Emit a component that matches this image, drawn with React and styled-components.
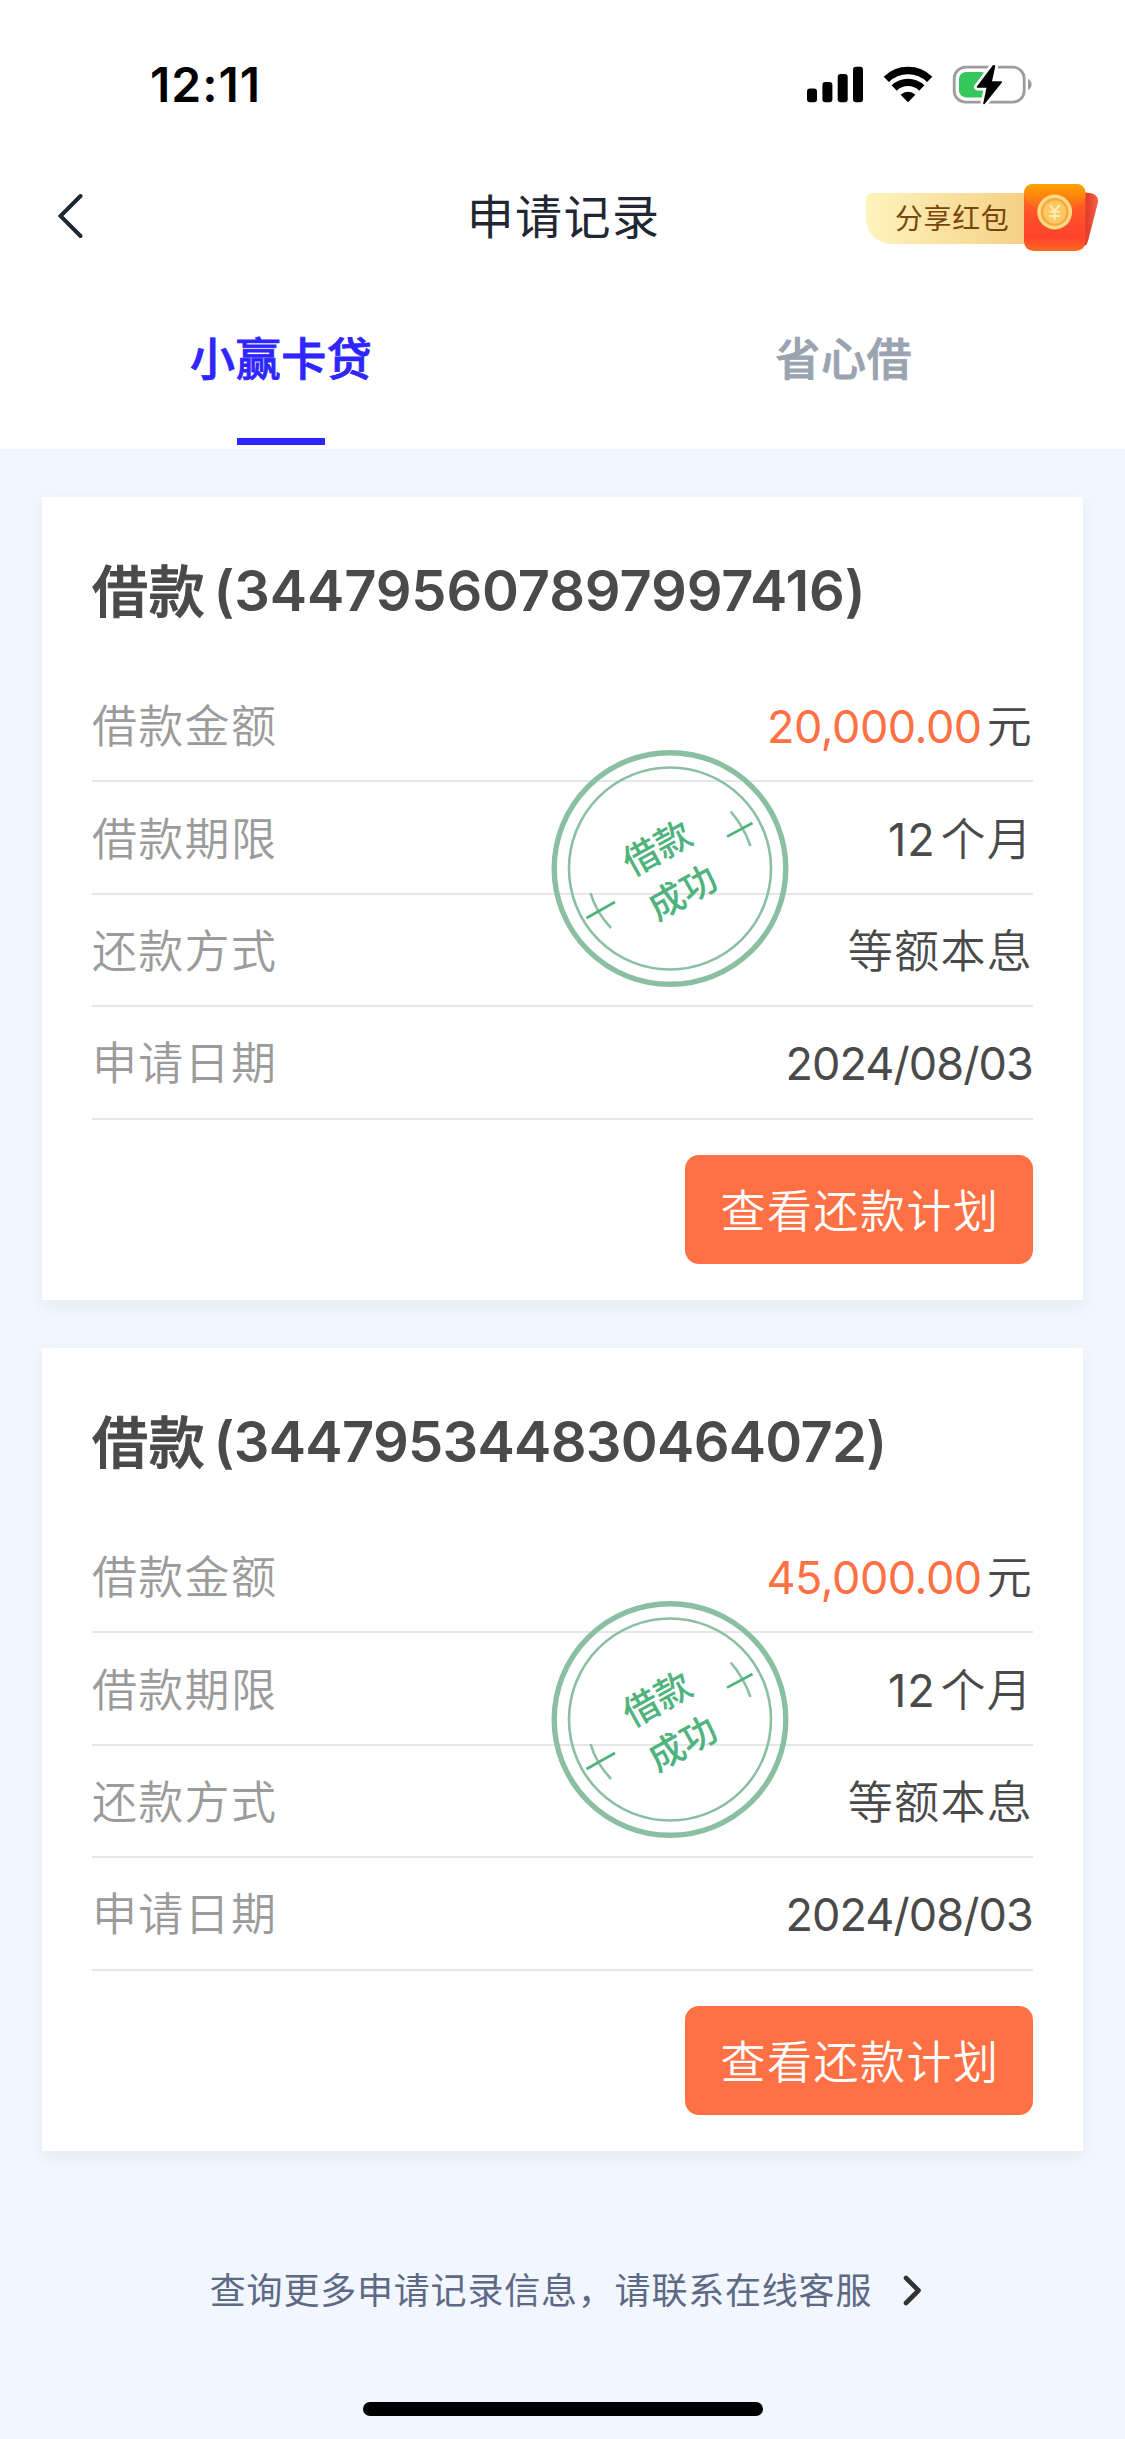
import React from "react";
import styled, { createGlobalStyle } from "styled-components";

const Global = createGlobalStyle`
  * { box-sizing: border-box; }
  body { margin: 0; background: #f2f6fe; }
  button { border: 0; padding: 0; margin: 0; background: none; font: inherit; color: inherit; }
`;

const Page = styled.div`
  width: 1125px;
  height: 2439px;
  display: flex;
  flex-direction: column;
  background: #f2f6fe;
  font-family: Inter, "Noto Sans CJK SC", sans-serif;
  overflow: hidden;
`;

const Top = styled.header`
  height: 449px;
  flex: none;
  background: #fff;
  display: flex;
  flex-direction: column;
`;

const StatusBar = styled.div`
  height: 141px;
  padding: 28px 93px 0 150px;
  display: flex;
  align-items: center;
  justify-content: space-between;
`;

const Clock = styled.div`
  font-size: 48px;
  font-weight: 600;
  line-height: 60px;
  letter-spacing: 1px;
  color: #000;
`;

const StatusIcons = styled.div`
  display: flex;
  align-items: center;
`;

const NavBar = styled.nav`
  height: 150px;
  display: grid;
  grid-template-columns: 1fr auto 1fr;
  align-items: center;
  padding: 0 26px;
`;

const BackButton = styled.button`
  display: flex;
  justify-self: start;
  padding-left: 32px;
`;

const NavTitle = styled.h1`
  margin: 2px 0 0;
  padding-left: 2px;
  font-size: 47px;
  font-weight: 400;
  line-height: 60px;
  color: #1f2733;
  letter-spacing: 1.4px;
`;

const Share = styled.button`
  justify-self: end;
  display: flex;
  align-items: center;
  padding-top: 4px;
`;

const ShareLabel = styled.span`
  width: 161px;
  height: 51px;
  margin-right: -4px;
  padding: 1px 0 0 29px;
  border-radius: 6px 0 0 26px;
  background: linear-gradient(90deg, #fef4bd, #f5d083);
  color: #79460f;
  font-size: 28px;
  line-height: 51px;
  text-align: left;
  letter-spacing: 0.6px;
`;

const Tabs = styled.div`
  flex: 1;
  display: grid;
  grid-template-columns: 1fr 1fr;
`;

const Tab = styled.button`
  display: flex;
  flex-direction: column;
  align-items: center;
  justify-content: space-between;
  padding: 38px 0 4px;
  font-size: 45px;
  font-weight: 500;
  -webkit-text-stroke: 0.8px currentColor;
  line-height: 62px;
  letter-spacing: 0.6px;
  color: ${(p) => (p.$active ? "#2f25ff" : "#9aa3b0")};
  &::after {
    content: "";
    width: 88px;
    height: 7px;
    background: ${(p) => (p.$active ? "#2f25ff" : "transparent")};
  }
`;

const List = styled.main`
  padding: 48px 42px 0;
  display: flex;
  flex-direction: column;
  gap: 48px;
`;

const Card = styled.article`
  position: relative;
  height: 803px;
  padding: 54px 50px 0;
  display: flex;
  flex-direction: column;
  background: #fff;
  box-shadow: 0 6px 14px rgba(40, 45, 60, 0.06);
`;

const CardTitle = styled.h2`
  margin: 0 0 40px;
  height: 79px;
  display: flex;
  align-items: center;
  gap: 8px;
  font-size: 56px;
  font-weight: 600;
  color: #4a4a4a;
  white-space: nowrap;
`;

const LoanKind = styled.span`
  margin-bottom: 7px;
  font-weight: 500;
  -webkit-text-stroke: 1px currentColor;
  letter-spacing: 0.8px;
`;

const LoanId = styled.span`
  letter-spacing: ${(p) => p.$spacing}px;
`;

const Row = styled.div`
  height: 112.4px;
  padding-top: 4px;
  display: flex;
  align-items: center;
  justify-content: space-between;
  border-bottom: 2px solid #e6e6e6;
  font-size: 45px;
  font-weight: 350;
  line-height: 64px;
`;

const Label = styled.span`
  color: #9b9b9b;
  letter-spacing: 1.3px;
`;

const Value = styled.span`
  display: flex;
  align-items: center;
  gap: 5px;
  color: #4a4a4a;
  letter-spacing: 1.3px;
`;

const Figure = styled.span`
  font-weight: 380;
  color: ${(p) => (p.$accent ? "#ff7043" : "inherit")};
  letter-spacing: ${(p) => p.$spacing ?? -0.5}px;
`;

const PlanButton = styled.button`
  align-self: flex-end;
  width: 348px;
  height: 109px;
  margin-top: 35px;
  padding: 0 0 2px 2px;
  border-radius: 14px;
  background: #ff7144;
  color: #fff;
  font-size: 45px;
  font-weight: 350;
  letter-spacing: 1.5px;
`;

const Stamp = styled.svg`
  position: absolute;
  left: 509px;
  top: 253px;
`;

const Footer = styled.footer`
  flex: 1;
  padding-top: 104px;
  display: flex;
  flex-direction: column;
  align-items: center;
`;

const Help = styled.a`
  margin-left: 8px;
  display: flex;
  align-items: center;
  gap: 31px;
  height: 70px;
  font-size: 36px;
  color: #5d6a85;
`;

const HelpText = styled.span`
  padding-bottom: 5px;
  letter-spacing: 0.8px;
`;

const HomeBar = styled.div`
  margin-top: 77px;
  width: 400px;
  height: 14px;
  border-radius: 7px;
  background: #000;
`;

const StatusGlyphs = () => (
  <svg width="226" height="42" viewBox="806 63 226 42">
    <rect x="807" y="87.5" width="10" height="13.7" rx="3" />
    <rect x="822.4" y="81" width="10" height="20.2" rx="3" />
    <rect x="837.7" y="73" width="10" height="28.2" rx="3" />
    <rect x="853" y="65.8" width="10" height="35.4" rx="3" />
    <g fill="none" stroke="#000" strokeWidth="7.4">
      <path d="M886.3 78.3 A31 31 0 0 1 929.7 78.3" />
      <path d="M894.2 87 A19.7 19.7 0 0 1 921.8 87" />
    </g>
    <path d="M908 101.3 L900.6 93.8 A10.5 10.5 0 0 1 915.4 93.8 Z" />
    <rect x="954.2" y="66.2" width="70" height="35" rx="11.5" fill="none" stroke="#9c9c9c" strokeWidth="2.8" />
    <path d="M1028 78 Q1031.6 80 1031.6 83.5 Q1031.6 87 1028 89 Z" fill="#9c9c9c" />
    <rect x="959" y="71" width="29" height="25.4" rx="7" fill="#34c759" />
    <path
      d="M993.5 64.8 L977.5 86 H987.5 L984 102.5 L1001.3 81 H991 L994.5 65 Z"
      stroke="#fff" strokeWidth="7" strokeLinejoin="round" fill="#fff"
    />
    <path
      d="M993.5 64.8 L977.5 86 H987.5 L984 102.5 L1001.3 81 H991 L994.5 65 Z"
      stroke="#000" strokeWidth="1.6" strokeLinejoin="round"
    />
  </svg>
);

const Envelope = () => (
  <svg width="76" height="70" viewBox="1023 183 76 70">
    <defs>
      <linearGradient id="env" x1="0" y1="0" x2="0" y2="1">
        <stop offset="0" stopColor="#ff7a1c" />
        <stop offset="0.5" stopColor="#ff4f28" />
        <stop offset="0.8" stopColor="#ff432c" />
        <stop offset="1" stopColor="#ff6a20" />
      </linearGradient>
      <linearGradient id="flap" x1="0" y1="0" x2="0" y2="1">
        <stop offset="0" stopColor="#ffa400" />
        <stop offset="1" stopColor="#ff5a22" />
      </linearGradient>
      <linearGradient id="backCard" x1="0" y1="0" x2="1" y2="0">
        <stop offset="0.3" stopColor="#dd3a2c" />
        <stop offset="1" stopColor="#fa5f48" />
      </linearGradient>
    </defs>
    <path d="M1080 192 L1090 193 Q1099.5 195 1097.8 203 L1088 241 Q1086.5 247 1080 247 Z" fill="url(#backCard)" />
    <rect x="1024" y="184" width="61.5" height="67" rx="9.5" fill="url(#env)" />
    <path d="M1024 197 V193.5 Q1024 184 1033.5 184 H1076 Q1085.5 184 1085.5 193.5 V197 Q1082 205 1072 209 Q1055 215 1038 209 Q1028 205 1024 197 Z" fill="url(#flap)" />
    <circle cx="1054.7" cy="213.2" r="17.4" fill="#e8602a" opacity="0.5" />
    <circle cx="1054.7" cy="212" r="17.4" fill="#fdd887" />
    <circle cx="1054.7" cy="212" r="12.7" fill="#fcc765" stroke="#f6a83c" strokeWidth="2.4" />
    <path d="M1049.6 205 L1054.7 211 L1059.8 205 M1054.7 211 V220 M1049.5 211.8 H1060 M1049.5 216 H1060" fill="none" stroke="#ffedb0" strokeWidth="2" />
  </svg>
);

const SuccessStamp = () => (
  <Stamp width="238" height="238" viewBox="-119 -119 238 238">
    <g fill="none" stroke="#8bbfa1">
      <circle cy="-0.5" r="115.8" strokeWidth="5.4" />
      <circle cy="-0.5" r="101" strokeWidth="2.6" />
      <path d="M60.7 -57.5 Q74 -42 80.5 -23" strokeWidth="2.6" />
      <path d="M-79.5 24 Q-74 43 -59 59" strokeWidth="2.6" />
      <g stroke="#4fb37d" strokeWidth="2.6">
        <path d="M57 -32.3 L82.5 -46" />
        <path d="M-83.5 49 L-55 33" />
      </g>
    </g>
    <g
      transform="rotate(-29)"
      fill="#4fb37d"
      fontFamily="'Noto Sans CJK SC', sans-serif"
      fontSize="36"
      fontWeight="500"
      textAnchor="middle"
    >
      <text x="-1" y="-11.5">借款</text>
      <text x="-0.5" y="39.5">成功</text>
    </g>
  </Stamp>
);

const loans = [
  { id: "344795607897997416", amount: "20,000.00", idSpacing: -0.15 },
  { id: "344795344830464072", amount: "45,000.00", idSpacing: -0.7 },
];

const LoanCard = ({ loan }) => (
  <Card>
    <CardTitle>
      <LoanKind>借款</LoanKind>
      <LoanId $spacing={loan.idSpacing}>({loan.id})</LoanId>
    </CardTitle>
    <Row>
      <Label>借款金额</Label>
      <Value><Figure $accent>{loan.amount}</Figure>元</Value>
    </Row>
    <Row>
      <Label>借款期限</Label>
      <Value><Figure $spacing={0.8}>12</Figure>个月</Value>
    </Row>
    <Row>
      <Label>还款方式</Label>
      <Value>等额本息</Value>
    </Row>
    <Row>
      <Label>申请日期</Label>
      <Value><Figure $spacing={-0.9}>2024/08/03</Figure></Value>
    </Row>
    <PlanButton>查看还款计划</PlanButton>
    <SuccessStamp />
  </Card>
);

export default function App() {
  return (
    <>
      <Global />
      <Page>
        <Top>
          <StatusBar>
            <Clock>12:11</Clock>
            <StatusIcons><StatusGlyphs /></StatusIcons>
          </StatusBar>
          <NavBar>
            <BackButton aria-label="返回">
              <svg width="26" height="46" viewBox="0 0 26 46" fill="none" stroke="#1f2733" strokeWidth="4" strokeLinecap="round">
                <path d="M22.5 3 L2.5 23 L22.5 43" />
              </svg>
            </BackButton>
            <NavTitle>申请记录</NavTitle>
            <Share>
              <ShareLabel>分享红包</ShareLabel>
              <Envelope />
            </Share>
          </NavBar>
          <Tabs>
            <Tab $active>小赢卡贷</Tab>
            <Tab>省心借</Tab>
          </Tabs>
        </Top>
        <List>
          {loans.map((loan) => <LoanCard key={loan.id} loan={loan} />)}
        </List>
        <Footer>
          <Help>
            <HelpText>查询更多申请记录信息，请联系在线客服</HelpText>
            <svg width="20" height="32" viewBox="0 0 20 32" fill="none" stroke="#333" strokeWidth="4.6" strokeLinecap="round" strokeLinejoin="round">
              <path d="M3 4 L15.5 16.5 L3 29" />
            </svg>
          </Help>
          <HomeBar />
        </Footer>
      </Page>
    </>
  );
}
